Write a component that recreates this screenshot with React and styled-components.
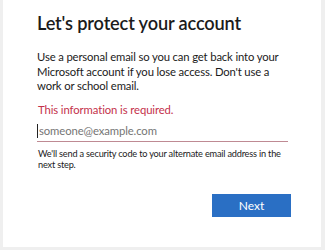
import React from "react";
import styled, { createGlobalStyle } from "styled-components";

const Global = createGlobalStyle`
  html, body { margin: 0; padding: 0; background: #efefef; }
  body { font-family: Lato, "Noto Sans", sans-serif; color: #1b1b1b; }
`;

const Frame = styled.div`
  width: 325px;
  height: 250px;
  padding: 0 4px 3px 3px;
  box-sizing: border-box;
`;

const Card = styled.div`
  background: #fff;
  height: 100%;
  box-sizing: border-box;
  padding: 10px 33px 0 34px;
  display: flex;
  flex-direction: column;
`;

const Title = styled.h1`
  margin: 0;
  font-size: 18.2px;
  font-weight: 600;
  line-height: 26px;
  color: #1b1b1b;
  letter-spacing: -0.15px;
`;

const Lead = styled.p`
  margin: 14px 0 0;
  font-size: 11.3px;
  line-height: 14.6px;
  letter-spacing: -0.15px;
  color: #1b1b1b;
`;

const Error = styled.div`
  margin-top: 9px;
  font-size: 11.3px;
  line-height: 14px;
  letter-spacing: -0.1px;
  color: #c4314b;
  padding-left: 1px;
`;

const Field = styled.div`
  margin-top: 4px;
  border-bottom: 1px solid #bf8a93;
  height: 20px;
  display: flex;
  align-items: center;
`;

const Input = styled.input`
  border: none;
  outline: none;
  padding: 0 0 0 1px;
  margin: 0;
  width: 100%;
  font-family: inherit;
  font-size: 11.3px;
  letter-spacing: -0.1px;
  color: #1b1b1b;
  background: transparent;
  border-left: 1px solid #222;
  height: 14px;
  &::placeholder { color: #757575; }
`;

const Hint = styled.p`
  margin: 6px 0 0;
  padding-left: 1px;
  font-size: 9.2px;
  line-height: 11.5px;
  letter-spacing: -0.2px;
  color: #1b1b1b;
`;

const Actions = styled.div`
  display: flex;
  justify-content: flex-end;
  margin-top: 23px;
`;

const Button = styled.button`
  width: 79px;
  height: 23px;
  background: #2a6fc4;
  color: #fff;
  border: none;
  font-family: inherit;
  font-size: 12px;
  padding: 0;
  margin-right: -3px;
`;

export default function App() {
  return (
    <>
      <Global />
      <Frame>
        <Card>
          <Title>Let's protect your account</Title>
          <Lead>
            Use a personal email so you can get back into your Microsoft account if you lose access. Don't use a work or school email.
          </Lead>
          <Error>This information is required.</Error>
          <Field>
            <Input placeholder="someone@example.com" />
          </Field>
          <Hint>We'll send a security code to your alternate email address in the next step.</Hint>
          <Actions>
            <Button>Next</Button>
          </Actions>
        </Card>
      </Frame>
    </>
  );
}
